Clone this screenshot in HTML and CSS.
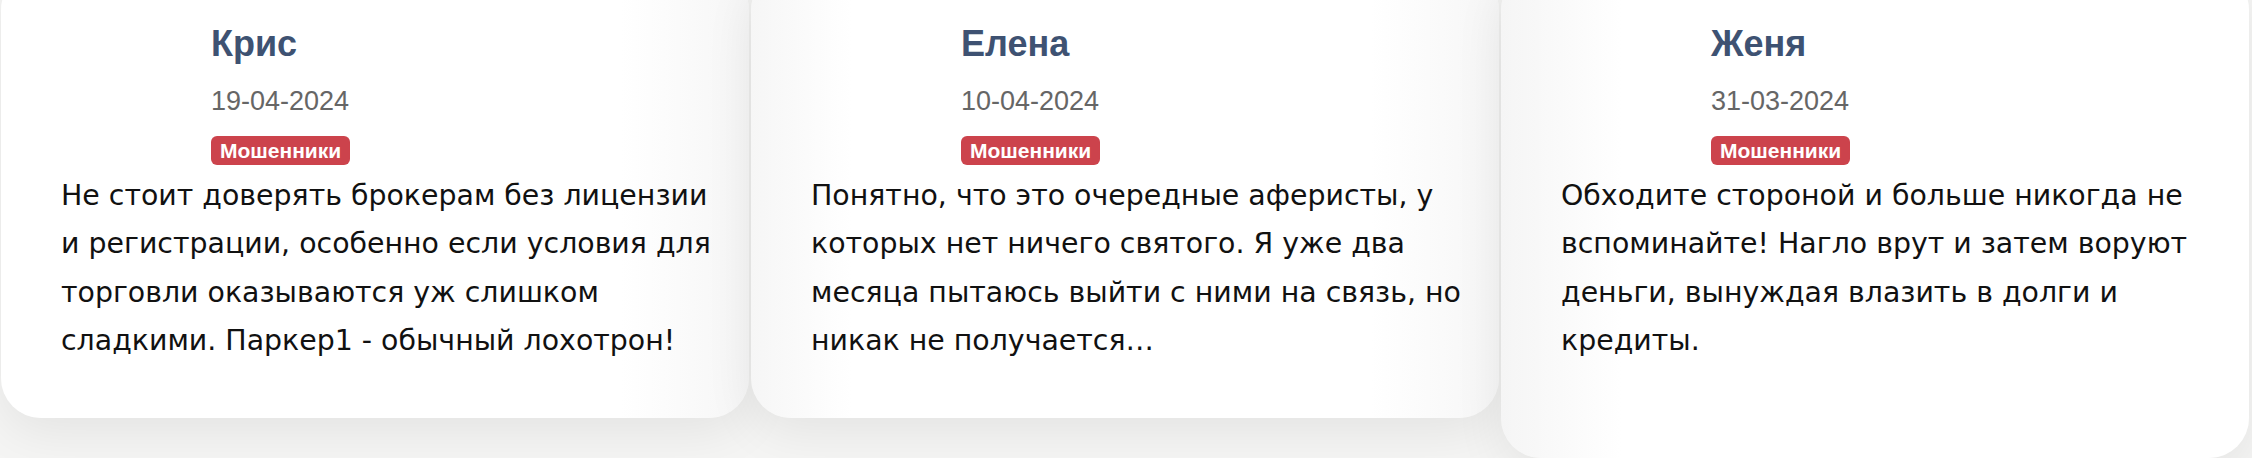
FILE: index.html
```html
<!DOCTYPE html>
<html lang="ru">
<head>
<meta charset="utf-8">
<title>Отзывы</title>
<link rel="stylesheet" href="styles.css">
</head>
<body>
<div class="reviews">
  <article class="review review--first">
    <header class="review__head">
      <div class="review__avatar"></div>
      <div class="review__meta">
        <div class="review__name">Крис</div>
        <div class="review__date">19-04-2024</div>
        <span class="review__badge">Мошенники</span>
      </div>
    </header>
    <p class="review__text">Не стоит доверять брокерам без лицензии и регистрации, особенно если условия для торговли оказываются уж слишком сладкими. Паркер1 - обычный лохотрон!</p>
  </article>
  <article class="review review--middle">
    <header class="review__head">
      <div class="review__avatar"></div>
      <div class="review__meta">
        <div class="review__name">Елена</div>
        <div class="review__date">10-04-2024</div>
        <span class="review__badge">Мошенники</span>
      </div>
    </header>
    <p class="review__text">Понятно, что это очередные аферисты, у которых нет ничего святого. Я уже два месяца пытаюсь выйти с ними на связь, но никак не получается…</p>
  </article>
  <article class="review review--last">
    <header class="review__head">
      <div class="review__avatar"></div>
      <div class="review__meta">
        <div class="review__name">Женя</div>
        <div class="review__date">31-03-2024</div>
        <span class="review__badge">Мошенники</span>
      </div>
    </header>
    <p class="review__text">Обходите стороной и больше никогда не вспоминайте! Нагло врут и затем воруют деньги, вынуждая влазить в долги и кредиты.</p>
  </article>
</div>
</body>
</html>
```
FILE: styles.css
```css
html, body {
  margin: 0;
  padding: 0;
}

body {
  background: #f5f5f4;
  font-family: "Liberation Sans", Arial, Helvetica, sans-serif;
  overflow: hidden;
}

.reviews {
  display: flex;
  align-items: flex-start;
  gap: 2px;
  margin-top: -30px;
  padding-left: 1px;
}

.review {
  flex: none;
  box-sizing: border-box;
  width: 748px;
  padding: 53px 28px 53px 60px;
  border-radius: 40px;
  background: #ffffff;
  box-shadow: 0 14px 50px rgba(0, 0, 0, 0.075);
}

.review--first {
  background: linear-gradient(to right, #ffffff 0, #ffffff 620px, #f6f6f6 100%);
}

.review--middle {
  background: linear-gradient(to right, #f6f6f6 0, #ffffff 100px, #ffffff 620px, #f6f6f6 100%);
}

.review--last {
  padding-bottom: 93px;
  background: linear-gradient(to right, #f5f5f5 0, #ffffff 120px, #ffffff 100%);
}

.review__head {
  display: flex;
}

.review__avatar {
  flex: none;
  width: 150px;
}

.review__meta {
  display: flex;
  flex-direction: column;
  align-items: flex-start;
}

.review__name {
  font-size: 36px;
  line-height: 42px;
  font-weight: 700;
  color: #3e5272;
  margin-bottom: 20px;
}

.review__date {
  font-size: 27px;
  line-height: 32px;
  color: #666666;
  margin-bottom: 19px;
}

.review__badge {
  display: inline-block;
  padding: 0 9px;
  border-radius: 6px;
  background: #cc434c;
  color: #ffffff;
  font-size: 21px;
  line-height: 29px;
  font-weight: 700;
}

.review__text {
  margin: 7px 0 0;
  font-family: "DejaVu Sans", "Liberation Sans", sans-serif;
  font-size: 28.4px;
  line-height: 48.3px;
  color: #111111;
}
```
